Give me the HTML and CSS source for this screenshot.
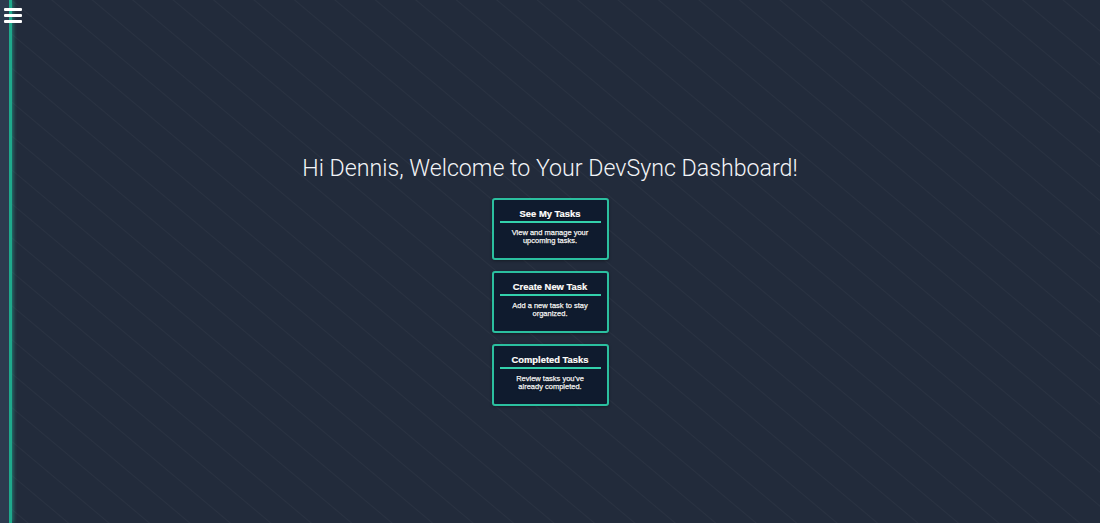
FILE: index.html
```html
<!DOCTYPE html>
<html lang="en">
<head>
<meta charset="utf-8">
<title>DevSync Dashboard</title>
<link rel="stylesheet" href="styles.css">
</head>
<body>
  <aside class="sidebar"></aside>
  <button class="menu-toggle" aria-label="Open menu">
    <span></span><span></span><span></span>
  </button>
  <main class="dashboard">
    <h1 class="welcome">Hi Dennis, Welcome to Your DevSync Dashboard!</h1>
    <div class="cards">
      <a class="card" href="#">
        <h3 class="card-title">See My Tasks</h3>
        <p class="card-text">View and manage your upcoming tasks.</p>
      </a>
      <a class="card" href="#">
        <h3 class="card-title">Create New Task</h3>
        <p class="card-text">Add a new task to stay organized.</p>
      </a>
      <a class="card" href="#">
        <h3 class="card-title">Completed Tasks</h3>
        <p class="card-text">Review tasks you've already completed.</p>
      </a>
    </div>
  </main>
</body>
</html>
```
FILE: styles.css
```css
html, body {
  height: 100%;
}

body {
  margin: 0;
  background-color: #222b3b;
  background-image:
    repeating-linear-gradient(40deg,
      rgba(255, 255, 255, 0) 0px,
      rgba(255, 255, 255, 0) 17px,
      rgba(255, 255, 255, 0.035) 18px,
      rgba(255, 255, 255, 0) 19px,
      rgba(255, 255, 255, 0) 26px);
  color: #ffffff;
  font-family: "Liberation Sans", Arial, sans-serif;
  overflow: hidden;
}

/* collapsed side navigation */
.sidebar {
  position: fixed;
  top: 0;
  left: 0;
  bottom: 0;
  width: 9px;
  background: #2d3a4e;
  border-right: 3px solid #1fa98c;
  box-shadow: 1px 0 4px rgba(38, 200, 165, 0.55);
}

.menu-toggle {
  position: fixed;
  top: 8px;
  left: 4px;
  width: 18px;
  height: 15px;
  padding: 0;
  border: 0;
  background: none;
  display: flex;
  flex-direction: column;
  justify-content: space-between;
  cursor: pointer;
}

.menu-toggle span {
  display: block;
  height: 3px;
  border-radius: 1px;
  background: #ffffff;
}

.dashboard {
  display: flex;
  flex-direction: column;
  align-items: center;
  padding-top: 154px;
}

.welcome {
  margin: 0 0 16px;
  font-family: Roboto, "Liberation Sans", sans-serif;
  font-weight: 300;
  font-size: 23.2px;
  line-height: 28px;
  color: #f2f4f7;
}

.cards {
  display: flex;
  flex-direction: column;
  gap: 11px;
}

.card {
  display: block;
  box-sizing: border-box;
  width: 117px;
  height: 62px;
  padding: 8px 6px 0;
  background: #0f1b2e;
  border: 2px solid #2bbf9f;
  border-radius: 3px;
  text-decoration: none;
  color: #ffffff;
  text-align: center;
  box-shadow: 0 1px 3px rgba(0, 0, 0, 0.35);
}

.card-title {
  margin: 0 0 6px;
  padding-bottom: 2px;
  font-size: 9.4px;
  line-height: 11px;
  font-weight: 700;
  border-bottom: 2px solid #33d1ac;
  -webkit-text-stroke: 0.2px #ffffff;
  text-shadow: 0 1px 1px rgba(0, 0, 0, 0.7);
}

.card-text {
  margin: 0 8px;
  font-size: 7.5px;
  line-height: 8px;
  font-weight: 400;
  color: #f2f4f7;
  -webkit-text-stroke: 0.25px #f2f4f7;
  text-shadow: 0 0 1px rgba(0, 0, 0, 0.9), 0 1px 1px rgba(0, 0, 0, 0.7);
}
```
